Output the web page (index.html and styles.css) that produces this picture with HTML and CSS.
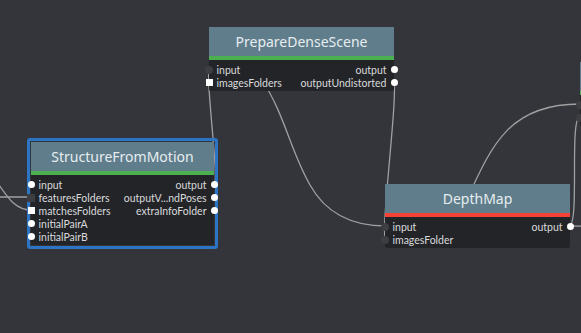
FILE: index.html
```html
<html>
  <head>
    <title>Graph Editor</title>
    <meta name="viewport" content="width=device-width, initial-scale=1" />
    <link rel="stylesheet" href="styles.css">
  </head>
  <body>
    <div class="graph">
      <svg class="edges" width="581" height="333" viewBox="0 0 581 333">
        <path d="M -10 197 L 31 197" />
        <path d="M -14 168 C 4 188, 10 210, 31 210" />
        <path d="M 214 184 C 220 184, 204 69, 210 69" />
        <path d="M 262 80 C 285 115, 290 150, 310 185 C 325 212, 350 226, 386 226" />
        <path d="M 393 82 C 400 82, 379 239, 386 239" />
        <path d="M 462 210 C 490 150, 505 104, 580 104" />
        <path d="M 569 226 C 580 226, 569 117, 580 117" />
        <path d="M 569 226 C 600 226, 610 228, 640 230" />
      </svg>

      <div class="node pds">
        <div class="title done">PrepareDenseScene</div>
        <div class="attrs">
          <div class="inputs">
            <div class="attr"><span class="port off"></span>input</div>
            <div class="attr"><span class="port square"></span>imagesFolders</div>
          </div>
          <div class="outputs">
            <div class="attr">output<span class="port"></span></div>
            <div class="attr">outputUndistorted<span class="port"></span></div>
          </div>
        </div>
      </div>

      <div class="node sfm selected">
        <div class="title done">StructureFromMotion</div>
        <div class="attrs">
          <div class="inputs">
            <div class="attr"><span class="port"></span>input</div>
            <div class="attr"><span class="port square off"></span>featuresFolders</div>
            <div class="attr"><span class="port square"></span>matchesFolders</div>
            <div class="attr"><span class="port"></span>initialPairA</div>
            <div class="attr"><span class="port"></span>initialPairB</div>
          </div>
          <div class="outputs">
            <div class="attr">output<span class="port"></span></div>
            <div class="attr">outputV...ndPoses<span class="port"></span></div>
            <div class="attr">extraInfoFolder<span class="port"></span></div>
          </div>
        </div>
      </div>

      <div class="node depthmap">
        <div class="title error">DepthMap</div>
        <div class="attrs">
          <div class="inputs">
            <div class="attr"><span class="port off"></span>input</div>
            <div class="attr"><span class="port off"></span>imagesFolder</div>
          </div>
          <div class="outputs">
            <div class="attr">output<span class="port"></span></div>
          </div>
        </div>
      </div>

      <!-- next node, only its left edge is in view -->
      <div class="node offscreen">
        <div class="title"></div>
        <div class="attrs">
          <div class="inputs">
            <div class="attr"><span class="port off"></span></div>
            <div class="attr"><span class="port off"></span></div>
          </div>
        </div>
      </div>
    </div>
  </body>
</html>
```

FILE: styles.css
```css
body {
  margin: 0;
  font-family: 'Lato', 'Noto Sans', sans-serif;
  background-color: #34353a;
}

.graph {
  position: relative;
  width: 581px;
  height: 333px;
  overflow: hidden;
  background-color: #34353a;
}

.edges {
  position: absolute;
  left: 0;
  top: 0;
}

.edges path {
  fill: none;
  stroke: #a0a0a2;
  stroke-width: 1.3;
}

.node {
  position: absolute;
  z-index: 1;
  width: 185px;
  background-color: #232427;
  border-radius: 2px;
}

.node.pds {
  left: 209px;
  top: 27px;
}

.node.sfm {
  left: 31px;
  top: 142px;
  width: 183px;
}

.node.depthmap {
  left: 385px;
  top: 184px;
}

.node.offscreen {
  left: 580px;
  top: 62px;
}

/* selection frame, kept under the ports */
.node.selected::before {
  content: '';
  position: absolute;
  left: -4px;
  top: -4px;
  right: -4px;
  bottom: -4px;
  border: 3px solid #2c74c4;
  border-radius: 3px;
  z-index: -1;
}

.node .title {
  height: 29px;
  line-height: 29px;
  text-align: center;
  font-family: 'Noto Sans', sans-serif;
  font-size: 14px;
  color: #e6edf0;
  background-color: #607d8b;
  border-bottom: 4px solid #4caf50;
  white-space: nowrap;
  overflow: hidden;
}

.node .title.error {
  border-bottom-color: #f44336;
}

.node .attrs {
  display: flex;
  justify-content: space-between;
  padding: 3px 0 2px;
}

.inputs, .outputs {
  display: flex;
  flex-direction: column;
}

.outputs {
  align-items: flex-end;
}

.attr {
  display: flex;
  align-items: center;
  height: 13px;
  font-size: 10.5px;
  color: #d8dadd;
  white-space: nowrap;
}

.port {
  flex: none;
  width: 7px;
  height: 7px;
  border-radius: 50%;
  background-color: #ffffff;
}

.inputs .port {
  margin-left: -3.5px;
  margin-right: 4px;
}

.outputs .port {
  margin-left: 4px;
  margin-right: -3.5px;
}

.port.off {
  width: 8px;
  height: 8px;
  background-color: #3d3e42;
}

.inputs .port.off {
  margin-left: -4px;
  margin-right: 3.5px;
}

.port.square {
  border-radius: 0;
}
```
